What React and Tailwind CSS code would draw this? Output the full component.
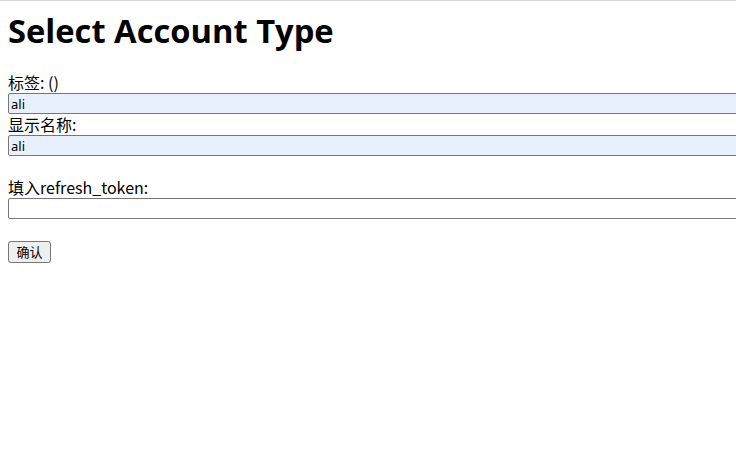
export default function App() {
  const cjk = { fontFamily: '"Segoe UI", "Noto Sans CJK SC", "Noto Sans", sans-serif' }
  return (
    <div className="min-h-[470px] w-[736px] overflow-hidden bg-white border-t border-[#d3d3d3] text-black" style={cjk}>
      <div className="px-2">
        <h1 className="h-[50px] pt-[9px] text-[32.7px] leading-[41px] font-bold whitespace-nowrap" style={{ fontFamily: '"Open Sans", "Noto Sans", sans-serif' }}>
          Select Account Type
        </h1>
        <div className="h-[21px]" />
        <div className="flex flex-col w-[740px]">
          <label className="h-[21px] text-[16px] leading-[21px]">标签: ()</label>
          <input
            className="h-[21px] w-full border border-[#767676] rounded-[2px] bg-[#e8f0fe] px-[2px] text-[13px] leading-[19px] outline-none"
            defaultValue="ali"
            style={{ fontFamily: '"Noto Sans", sans-serif' }}
          />
          <label className="h-[21px] text-[16px] leading-[21px]">显示名称:</label>
          <input
            className="h-[21px] w-full border border-[#767676] rounded-[2px] bg-[#e8f0fe] px-[2px] text-[13px] leading-[19px] outline-none"
            defaultValue="ali"
            style={{ fontFamily: '"Noto Sans", sans-serif' }}
          />
          <div className="h-[21px]" />
          <label className="h-[21px] text-[16px] leading-[21px]">填入refresh_token:</label>
          <input className="h-[21px] w-full border border-[#767676] rounded-[2px] bg-white px-[2px] text-[13px] outline-none" />
          <div className="h-[22px]" />
          <div className="flex">
            <button className="h-[22px] w-[43px] border border-[#767676] rounded-[3px] bg-[#efefef] text-[13px] leading-[20px]">
              确认
            </button>
          </div>
        </div>
      </div>
    </div>
  )
}
